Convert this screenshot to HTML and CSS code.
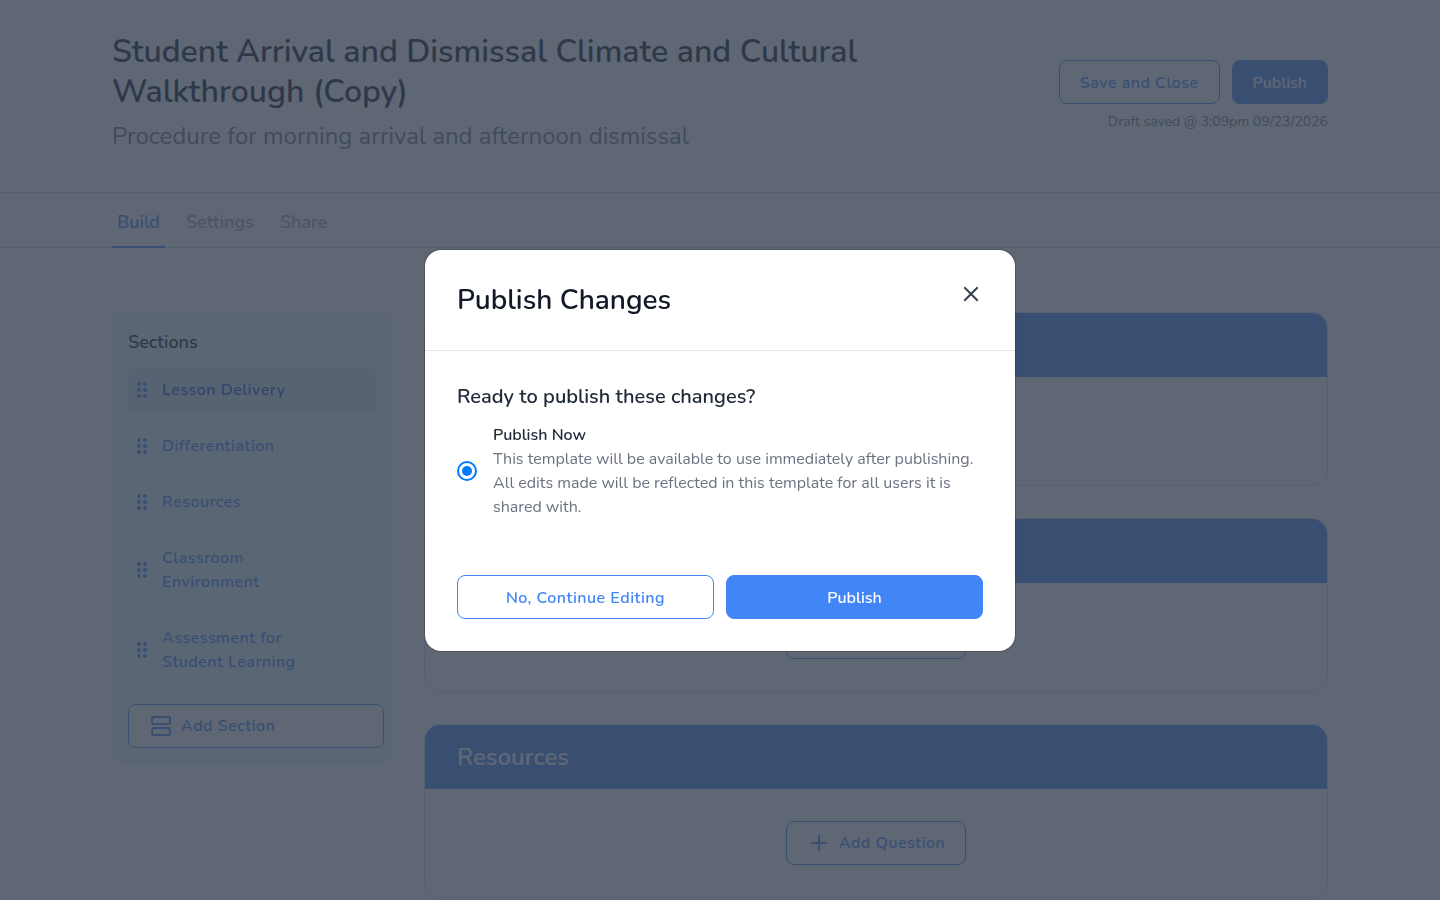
FILE: index.html
```html
<!DOCTYPE html>
<html lang="en">
<head>
  <meta charset="UTF-8" />
  <meta name="viewport" content="width=device-width, initial-scale=1.0" />
  <title>Publish Changes</title>
  <link rel="stylesheet" href="styles.css">
</head>
<body>
  <svg class="sprite" aria-hidden="true">
    <symbol id="grip" viewBox="0 0 12 18">
      <circle cx="3" cy="3" r="2" /><circle cx="9" cy="3" r="2" />
      <circle cx="3" cy="9" r="2" /><circle cx="9" cy="9" r="2" />
      <circle cx="3" cy="15" r="2" /><circle cx="9" cy="15" r="2" />
    </symbol>
    <symbol id="plus" viewBox="0 0 24 24">
      <path d="M12 4v16M4 12h16" fill="none" stroke="currentColor" stroke-width="2" />
    </symbol>
  </svg>

  <header class="page-header">
    <div class="container header-row">
      <div class="header-text">
        <h1>Student Arrival and Dismissal Climate and Cultural Walkthrough (Copy)</h1>
        <p class="subtitle">Procedure for morning arrival and afternoon dismissal</p>
      </div>
      <div class="header-actions">
        <div class="button-row">
          <button class="btn btn-outline" type="button">Save and Close</button>
          <button class="btn btn-primary" type="button">Publish</button>
        </div>
        <p class="draft">Draft saved @ 3:09pm 09/23/2026</p>
      </div>
    </div>
  </header>

  <nav class="tabs">
    <div class="container tab-row">
      <a class="tab active" href="#build">Build</a>
      <a class="tab" href="#settings">Settings</a>
      <a class="tab" href="#share">Share</a>
    </div>
  </nav>

  <div class="container content">
    <aside class="sidebar">
      <h2>Sections</h2>
      <ul class="section-list">
        <li><a class="section active" href="#lesson"><svg class="grip"><use href="#grip" /></svg><span>Lesson Delivery</span></a></li>
        <li><a class="section" href="#differentiation"><svg class="grip"><use href="#grip" /></svg><span>Differentiation</span></a></li>
        <li><a class="section" href="#resources"><svg class="grip"><use href="#grip" /></svg><span>Resources</span></a></li>
        <li><a class="section" href="#classroom"><svg class="grip"><use href="#grip" /></svg><span>Classroom Environment</span></a></li>
        <li><a class="section" href="#assessment"><svg class="grip"><use href="#grip" /></svg><span>Assessment for Student Learning</span></a></li>
      </ul>
      <button class="btn btn-outline add-section" type="button">
        <svg class="icon" viewBox="0 0 24 24" fill="none" stroke="currentColor" stroke-width="2">
          <rect x="3" y="3" width="18" height="7" rx="2" />
          <rect x="3" y="14" width="18" height="7" rx="2" />
        </svg>
        Add Section
      </button>
    </aside>

    <main class="cards">
      <section class="card" id="lesson">
        <h2>Lesson Delivery</h2>
        <div class="card-body">
          <button class="btn btn-outline add-question" type="button"><svg class="icon"><use href="#plus" /></svg>Add Question</button>
        </div>
      </section>
      <section class="card" id="differentiation">
        <h2>Differentiation</h2>
        <div class="card-body">
          <button class="btn btn-outline add-question" type="button"><svg class="icon"><use href="#plus" /></svg>Add Question</button>
        </div>
      </section>
      <section class="card" id="resources">
        <h2>Resources</h2>
        <div class="card-body">
          <button class="btn btn-outline add-question" type="button"><svg class="icon"><use href="#plus" /></svg>Add Question</button>
        </div>
      </section>
    </main>
  </div>

  <div class="overlay">
    <div class="modal" role="dialog" aria-modal="true" aria-labelledby="modal-title">
      <div class="modal-header">
        <h2 id="modal-title">Publish Changes</h2>
        <button class="close" type="button" aria-label="Close">
          <svg class="icon" viewBox="0 0 24 24"><path d="M6 6l12 12M18 6L6 18" fill="none" stroke="currentColor" stroke-width="2" stroke-linecap="square" /></svg>
        </button>
      </div>
      <div class="modal-body">
        <h3>Ready to publish these changes?</h3>
        <div class="option">
          <input type="radio" id="publish-now" name="publish" checked>
          <label for="publish-now">
            <strong>Publish Now</strong>
            This template will be available to use immediately after publishing. All edits made will be reflected in this template for all users it is shared with.
          </label>
        </div>
        <div class="button-row modal-actions">
          <button class="btn btn-outline" type="button">No, Continue Editing</button>
          <button class="btn btn-primary" type="button">Publish</button>
        </div>
      </div>
    </div>
  </div>
</body>
</html>
```
FILE: styles.css
```css
* {
  box-sizing: border-box;
}
body {
  margin: 0;
  font-family: Nunito, Lato, sans-serif;
  font-size: 16px;
  line-height: 24px;
  color: #111827;
  background: #fff;
  overflow: hidden;
}
h1, h2, h3, p, ul {
  margin: 0;
  padding: 0;
}
a {
  text-decoration: none;
}
.sprite {
  display: none;
}
.icon {
  width: 24px;
  height: 24px;
}
.container {
  max-width: 1280px;
  margin: 0 auto;
  padding: 0 32px;
}

/* buttons */
.btn {
  display: flex;
  align-items: center;
  justify-content: center;
  height: 44px;
  padding: 0 20px;
  border: 1px solid #4285f6;
  border-radius: 8px;
  font-family: inherit;
  font-size: 16px;
  font-weight: 600;
  line-height: 24px;
  cursor: pointer;
}
.btn-outline {
  background: #fff;
  color: #4285f6;
  letter-spacing: 0.03em;
}
.btn-primary {
  min-width: 96px;
  background: #4285f6;
  color: #fff;
}
.button-row {
  display: flex;
  justify-content: flex-end;
  gap: 12px;
}
.button-row .btn {
  padding-top: 2px;
}

/* header */
.page-header {
  padding: 32px 0 40px;
  border-bottom: 1px solid #c8dce4;
}
.header-row {
  display: flex;
  justify-content: space-between;
  gap: 64px;
}
.header-text {
  max-width: 800px;
}
h1 {
  font-size: 32px;
  font-weight: 600;
  line-height: 40px;
}
.subtitle {
  margin-top: 8px;
  font-size: 24px;
  line-height: 32px;
  color: #6b7280;
}
.header-actions {
  flex-shrink: 0;
  padding-top: 28px;
}
.draft {
  margin-top: 8px;
  font-size: 14px;
  line-height: 20px;
  text-align: right;
  color: #6b7280;
}

/* tabs */
.tabs {
  background: #fcfdfd;
  border-bottom: 1px solid #c8dce4;
}
.tab-row {
  display: flex;
  gap: 16px;
}
.tab {
  height: 54px;
  padding: 0 5px;
  margin-bottom: -1px;
  font-size: 18px;
  font-weight: 600;
  line-height: 58px;
  color: #9ca3af;
}
.tab.active {
  height: 55px;
  border-bottom: 2px solid #4285f6;
  color: #4285f6;
}

/* content */
.content {
  display: flex;
  align-items: flex-start;
  gap: 32px;
  padding-top: 64px;
}
.sidebar {
  width: 280px;
  padding: 16px 8px 16px 16px;
  border-radius: 16px;
  background: #ebf7fc;
}
.sidebar h2 {
  font-size: 18px;
  font-weight: 600;
  line-height: 28px;
}
.section-list {
  display: flex;
  flex-direction: column;
  gap: 12px;
  margin: 12px 8px 20px 0;
  list-style: none;
}
.section {
  display: flex;
  align-items: center;
  gap: 14px;
  padding: 10px 56px 10px 8px;
  border-radius: 8px;
  font-weight: 600;
  letter-spacing: 0.03em;
  color: #4285f6;
}
.section.active {
  background: #d8ecf6;
  color: #1e56bf;
}
.grip {
  flex-shrink: 0;
  width: 12px;
  height: 18px;
  fill: #4285f6;
}
.add-section {
  justify-content: flex-start;
  gap: 8px;
  width: 100%;
}
.cards {
  display: flex;
  flex: 1;
  flex-direction: column;
  gap: 32px;
}
.card {
  overflow: hidden;
  border: 1px solid #c8dce4;
  border-radius: 16px;
}
.card h2 {
  padding: 16px 32px;
  font-size: 24px;
  font-weight: 600;
  line-height: 32px;
  background: #4285f6;
  color: #fff;
}
.card-body {
  display: flex;
  justify-content: center;
  padding: 32px;
}
.add-question {
  gap: 8px;
}

/* modal */
.overlay {
  position: fixed;
  inset: 0;
  display: flex;
  align-items: center;
  justify-content: center;
  background: rgba(55, 65, 81, 0.8);
}
.modal {
  width: 590px;
  border-radius: 16px;
  background: #fff;
  box-shadow: 0 0 2px rgba(0, 0, 0, 0.6);
}
.modal-header {
  display: flex;
  align-items: flex-start;
  justify-content: space-between;
  padding: 32px;
  border-bottom: 1px solid #e5e7eb;
}
.modal-header h2 {
  font-size: 28px;
  font-weight: 600;
  line-height: 36px;
}
.close {
  display: flex;
  padding: 0;
  border: 0;
  background: none;
  color: #374151;
  cursor: pointer;
}
.modal-body {
  padding: 32px;
}
.modal-body h3 {
  font-size: 20px;
  font-weight: 600;
  line-height: 28px;
  color: #1f2937;
}
.option {
  display: flex;
  align-items: center;
  gap: 16px;
  margin: 12px 0 56px;
}
.option input {
  appearance: none;
  display: grid;
  place-items: center;
  flex-shrink: 0;
  width: 20px;
  height: 20px;
  margin: 0;
  border: 2px solid #007bff;
  border-radius: 50%;
  background: #fff;
}
.option input:checked::before {
  content: "";
  width: 10px;
  height: 10px;
  border-radius: 50%;
  background: #007bff;
}
.option label {
  color: #6b7280;
}
.option strong {
  display: block;
  font-weight: 600;
  color: #1f2937;
}
.modal-actions .btn {
  flex: 1;
}
```
